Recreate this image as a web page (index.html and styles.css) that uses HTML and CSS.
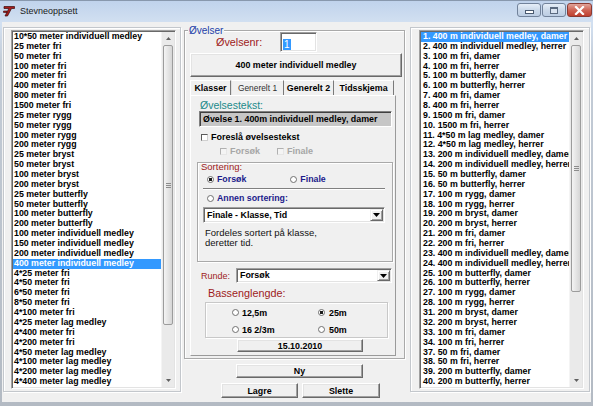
FILE: index.html
```html
<!DOCTYPE html>
<html lang="no">
<head>
<meta charset="utf-8">
<title>Stevneoppsett</title>
<link rel="stylesheet" href="styles.css">
</head>
<body>
<div class="window">
  <div class="titlebar">
    <svg class="app-icon" width="13" height="12" viewBox="0 0 13 12">
      <path d="M1 1.5 H11.5 V3.5 H8.5 L4.5 11 H2 L5.8 3.5 H1 Z" fill="#a51c1c" stroke="#3a0a0a" stroke-width="0.7"/>
      <path d="M0.5 6 H4 V7.5 H0.5 Z" fill="#a51c1c" stroke="#3a0a0a" stroke-width="0.6"/>
    </svg>
    <span class="title">Stevneoppsett</span>
    <div class="caption-buttons">
      <span class="cap cap-min"><span class="glyph-min"></span></span>
      <span class="cap cap-max"><span class="glyph-max"></span></span>
      <span class="cap cap-close">
        <svg width="11" height="9" viewBox="0 0 11 9"><path d="M2 1 L9 8 M9 1 L2 8" stroke="#fff" stroke-width="2.2" stroke-linecap="square"/></svg>
      </span>
    </div>
  </div>

  <div class="client">
    <div class="panel panel-left">
      <div class="listbox">
        <ul class="items">
          <li>10*50 meter individuell medley</li>
          <li>25 meter fri</li>
          <li>50 meter fri</li>
          <li>100 meter fri</li>
          <li>200 meter fri</li>
          <li>400 meter fri</li>
          <li>800 meter fri</li>
          <li>1500 meter fri</li>
          <li>25 meter rygg</li>
          <li>50 meter rygg</li>
          <li>100 meter rygg</li>
          <li>200 meter rygg</li>
          <li>25 meter bryst</li>
          <li>50 meter bryst</li>
          <li>100 meter bryst</li>
          <li>200 meter bryst</li>
          <li>25 meter butterfly</li>
          <li>50 meter butterfly</li>
          <li>100 meter butterfly</li>
          <li>200 meter butterfly</li>
          <li>100 meter individuell medley</li>
          <li>150 meter individuell medley</li>
          <li>200 meter individuell medley</li>
          <li class="selected">400 meter individuell medley</li>
          <li>4*25 meter fri</li>
          <li>4*50 meter fri</li>
          <li>6*50 meter fri</li>
          <li>8*50 meter fri</li>
          <li>4*100 meter fri</li>
          <li>4*25 meter lag medley</li>
          <li>4*400 meter fri</li>
          <li>4*200 meter fri</li>
          <li>4*50 meter lag medley</li>
          <li>4*100 meter lag medley</li>
          <li>4*200 meter lag medley</li>
          <li>4*400 meter lag medley</li>
        </ul>
        <div class="scrollbar">
          <div class="sb-arrow"><svg width="5" height="3" viewBox="0 0 5 3"><path d="M0 3 L2.5 0 L5 3 Z" fill="#606060"/></svg></div>
          <div class="sb-track">
            <div class="sb-thumb thumb-left"><span class="grip"></span></div>
          </div>
          <div class="sb-arrow"><svg width="5" height="3" viewBox="0 0 5 3"><path d="M0 0 L2.5 3 L5 0 Z" fill="#606060"/></svg></div>
        </div>
      </div>
    </div>

    <div class="center">
      <div class="group">
        <div class="legend">Øvelser</div>
        <div class="nr-row">
          <span class="lbl-nr">Øvelsenr:</span>
          <span class="edit"><span class="sel">1</span></span>
        </div>
        <div class="btn btn-event">400 meter individuell medley</div>
        <div class="tabs">
          <span class="tab tab-1">Klasser</span>
          <span class="tab tab-2 active">Generelt 1</span>
          <span class="tab tab-3">Generelt 2</span>
          <span class="tab tab-4">Tidsskjema</span>
        </div>
        <div class="tabpage">
          <div class="lbl-tekst">Øvelsestekst:</div>
          <div class="textbox">Øvelse 1. 400m individuell medley, damer</div>
          <div class="check-row">
            <span class="check"></span><span class="check-lbl">Foreslå øvelsestekst</span>
          </div>
          <div class="check-row sub">
            <span class="check disabled"></span><span class="check-lbl dis">Forsøk</span>
            <span class="check disabled second"></span><span class="check-lbl dis">Finale</span>
          </div>
          <div class="sort-frame">
            <div class="lbl-sort">Sortering:</div>
            <div class="radio-row">
              <span class="radio checked"></span><span class="radio-lbl">Forsøk</span>
              <span class="radio r-second"></span><span class="radio-lbl">Finale</span>
            </div>
            <div class="sep"></div>
            <div class="radio-row annen">
              <span class="radio"></span><span class="radio-lbl">Annen sortering:</span>
            </div>
            <div class="combo combo-sort">
              <span class="combo-text">Finale - Klasse, Tid</span>
              <span class="combo-btn"><svg width="7" height="4" viewBox="0 0 7 4"><path d="M0 0 H7 L3.5 4 Z" fill="#000"/></svg></span>
            </div>
            <p class="note">Fordeles sortert på klasse,<br>deretter tid.</p>
          </div>
          <div class="runde-row">
            <span class="lbl-runde">Runde:</span>
            <div class="combo combo-runde">
              <span class="combo-text">Forsøk</span>
              <span class="combo-btn"><svg width="7" height="4" viewBox="0 0 7 4"><path d="M0 0 H7 L3.5 4 Z" fill="#000"/></svg></span>
            </div>
          </div>
          <div class="lbl-bass">Bassenglengde:</div>
          <div class="bass-frame">
            <div class="bass-cell"><span class="radio"></span><span class="bass-lbl">12,5m</span></div>
            <div class="bass-cell"><span class="radio checked"></span><span class="bass-lbl">25m</span></div>
            <div class="bass-cell"><span class="radio"></span><span class="bass-lbl">16 2/3m</span></div>
            <div class="bass-cell"><span class="radio"></span><span class="bass-lbl">50m</span></div>
          </div>
          <div class="btn btn-date">15.10.2010</div>
        </div>
      </div>
      <div class="btn btn-ny">Ny</div>
      <div class="action-row">
        <div class="btn btn-lagre">Lagre</div>
        <div class="btn btn-slette">Slette</div>
      </div>
    </div>

    <div class="panel panel-right">
      <div class="listbox">
        <ul class="items">
          <li class="selected">1. 400 m individuell medley, damer</li>
          <li>2. 400 m individuell medley, herrer</li>
          <li>3. 100 m fri, damer</li>
          <li>4. 100 m fri, herrer</li>
          <li>5. 100 m butterfly, damer</li>
          <li>6. 100 m butterfly, herrer</li>
          <li>7. 400 m fri, damer</li>
          <li>8. 400 m fri, herrer</li>
          <li>9. 1500 m fri, damer</li>
          <li>10. 1500 m fri, herrer</li>
          <li>11. 4*50 m lag medley, damer</li>
          <li>12. 4*50 m lag medley, herrer</li>
          <li>13. 200 m individuell medley, damer</li>
          <li>14. 200 m individuell medley, herrer</li>
          <li>15. 50 m butterfly, damer</li>
          <li>16. 50 m butterfly, herrer</li>
          <li>17. 100 m rygg, damer</li>
          <li>18. 100 m rygg, herrer</li>
          <li>19. 200 m bryst, damer</li>
          <li>20. 200 m bryst, herrer</li>
          <li>21. 200 m fri, damer</li>
          <li>22. 200 m fri, herrer</li>
          <li>23. 400 m individuell medley, damer</li>
          <li>24. 400 m individuell medley, herrer</li>
          <li>25. 100 m butterfly, damer</li>
          <li>26. 100 m butterfly, herrer</li>
          <li>27. 100 m rygg, damer</li>
          <li>28. 100 m rygg, herrer</li>
          <li>31. 200 m bryst, damer</li>
          <li>32. 200 m bryst, herrer</li>
          <li>33. 100 m fri, damer</li>
          <li>34. 100 m fri, herrer</li>
          <li>37. 50 m fri, damer</li>
          <li>38. 50 m fri, herrer</li>
          <li>39. 200 m butterfly, damer</li>
          <li>40. 200 m butterfly, herrer</li>
        </ul>
        <div class="scrollbar">
          <div class="sb-arrow"><svg width="5" height="3" viewBox="0 0 5 3"><path d="M0 3 L2.5 0 L5 3 Z" fill="#606060"/></svg></div>
          <div class="sb-track">
            <div class="sb-thumb thumb-right"><span class="grip"></span></div>
          </div>
          <div class="sb-arrow"><svg width="5" height="3" viewBox="0 0 5 3"><path d="M0 0 L2.5 3 L5 0 Z" fill="#606060"/></svg></div>
        </div>
      </div>
    </div>
  </div>
</div>
</body>
</html>
```

FILE: styles.css
```css
* { box-sizing: border-box; }
html, body { margin: 0; padding: 0; }
body {
  width: 593px;
  height: 406px;
  overflow: hidden;
  font-family: "Liberation Sans", Arial, sans-serif;
  background: #b4bcc6;
}
.window {
  width: 593px;
  height: 406px;
  display: flex;
  flex-direction: column;
  background: linear-gradient(to bottom, #c0d3ec 0, #d2e0f1 22px, #c3ccd7 60px, #b3bac3 100%);
  border-top: 1px solid #8898ad;
}

/* title bar */
.titlebar {
  height: 21px;
  display: flex;
  align-items: center;
  flex: none;
}
.app-icon { margin-left: 3px; margin-top: -1px; flex: none; }
.title {
  margin-left: 4px;
  font-size: 9px;
  color: #1a1a1a;
  margin-top: -1px;
}
.caption-buttons {
  margin-left: auto;
  align-self: flex-start;
  margin-top: 2px;
  margin-right: 1px;
  display: flex;
  gap: 1px;
}
.cap {
  width: 24px;
  height: 14px;
  border: 1px solid #72839b;
  border-radius: 3px;
  background: linear-gradient(to bottom, #e6eef8 0%, #cbd9ea 50%, #bccde3 100%);
  display: flex;
  align-items: center;
  justify-content: center;
}
.cap-close {
  width: 25px;
  border-color: #8a3a32;
  background: linear-gradient(to bottom, #e0a49a 0%, #cf6455 50%, #c0402f 100%);
}
.glyph-min {
  width: 9px;
  height: 4px;
  margin-top: 4px;
  background: #fff;
  border: 1px solid #4a5a70;
}
.glyph-max {
  width: 8px;
  height: 7px;
  border: 1px solid #5a6a80;
  border-top-width: 2px;
  background: #d9e3f0;
}

/* client */
.client {
  height: 380px;
  margin: 0 2px;
  background: #f0f0f0;
  display: flex;
  align-items: flex-start;
  padding-top: 5px;
}
.panel {
  height: 365px;
  border: 1px solid #c3c7cc;
  box-shadow: inset 1px 1px 0 #fff, 1px 1px 0 #fff;
  padding-top: 2px;
  flex: none;
}
.panel-left {
  width: 178px;
  margin-left: 1px;
  padding-left: 7px;
}
.panel-right {
  width: 180px;
  padding-left: 8px;
}

/* listbox */
.listbox {
  width: 165px;
  height: 359px;
  display: flex;
  border-style: solid;
  border-width: 1px;
  border-color: #a0a0a0 #fff #fff #a0a0a0;
  box-shadow: inset 1px 1px 0 #696969, inset -1px -1px 0 #e3e3e3;
  background: #fff;
  padding: 1px;
}
.items {
  list-style: none;
  margin: 0;
  padding: 0;
  flex: 1;
  min-width: 0;
  overflow: hidden;
}
.items li {
  font-size: 8.8px;
  font-weight: bold;
  line-height: 9.86px;
  height: 9.86px;
  white-space: nowrap;
  overflow: hidden;
  padding-left: 1px;
  color: #000;
}
.panel-right .items li { padding-left: 2px; }
.items li.selected {
  background: #3399ff;
  color: #fff;
}
.scrollbar {
  width: 13px;
  flex: none;
  display: flex;
  flex-direction: column;
  background: #eaeaea;
  border-left: 1px solid #f4f4f4;
}
.sb-arrow {
  height: 13px;
  display: flex;
  align-items: center;
  justify-content: center;
  flex: none;
}
.sb-track {
  flex: 1;
  padding: 0 1px;
}
.sb-thumb {
  border: 1px solid #9c9c9c;
  border-radius: 2px;
  background: linear-gradient(to right, #f4f4f4, #e2e2e2 60%, #d6d6d6);
  display: flex;
  align-items: center;
  justify-content: center;
}
.thumb-left { height: 280px; }
.thumb-right { height: 247px; }
.grip {
  width: 5px;
  height: 5px;
  border-top: 1px solid #8c8c8c;
  border-bottom: 1px solid #8c8c8c;
  background: linear-gradient(to bottom, transparent 1px, #8c8c8c 1px, #8c8c8c 2px, transparent 2px);
}

/* center column */
.center {
  width: 229px;
  flex: none;
  padding-left: 3px;
  padding-top: 3px;
}
.group {
  width: 221px;
  height: 329px;
  border: 1px solid #a9a9a9;
  box-shadow: inset 1px 1px 0 #fff, 1px 1px 0 #fff;
}
.legend {
  width: fit-content;
  margin-top: -6px;
  margin-left: 3px;
  padding: 0 1px;
  background: #f0f0f0;
  color: #1c3fa8;
  font-size: 10px;
  line-height: 11px;
}
.nr-row {
  display: flex;
  align-items: center;
  height: 20px;
  margin-top: -4px;
}
.lbl-nr {
  margin-left: 31px;
  font-size: 10.8px;
  color: #9e1b1b;
  width: 46px;
}
.edit {
  margin-left: 18px;
  width: 37px;
  height: 20px;
  background: #fff;
  border-style: solid;
  border-width: 1px;
  border-color: #a0a0a0 #fff #fff #a0a0a0;
  box-shadow: inset 1px 1px 0 #696969, inset -1px -1px 0 #e3e3e3;
  padding: 1px 0 0 2px;
}
.sel {
  display: inline-block;
  background: #3399ff;
  color: #fff;
  font-size: 10px;
  line-height: 11px;
  padding: 0 1px;
}

.btn {
  background: #f0f0f0;
  border-style: solid;
  border-width: 1px;
  border-color: #fff #696969 #696969 #fff;
  box-shadow: inset -1px -1px 0 #a0a0a0, inset 1px 1px 0 #e3e3e3;
  font-size: 8.9px;
  font-weight: bold;
  color: #000;
  display: flex;
  align-items: center;
  justify-content: center;
}
.btn-event {
  margin: 1px 0 0 5px;
  width: 212px;
  height: 24px;
}

/* tabs */
.tabs {
  display: flex;
  margin: 3px 0 0 5px;
  height: 15px;
}
.tab {
  height: 15px;
  font-size: 8.9px;
  font-weight: bold;
  display: flex;
  align-items: center;
  justify-content: center;
  border-top: 1px solid #fff;
  border-right: 1px solid #7a7a7a;
  color: #000;
}
.tab-1 { width: 41px; border-left: 1px solid #fff; }
.tab-2 { width: 53px; }
.tab-3 { width: 50px; }
.tab-4 { width: 60px; }
.tab.active {
  font-weight: normal;
  color: #303030;
  font-size: 8.4px;
  border-left: 1px solid #e0e0e0;
}
.tabpage {
  margin-left: 5px;
  width: 206px;
  height: 261px;
  border-top: 1px solid #fff;
  border-left: 1px solid #fff;
  border-right: 1px solid #9a9a9a;
  border-bottom: 1px solid #9a9a9a;
}
.lbl-tekst {
  margin: 4px 0 0 9px;
  font-size: 10.5px;
  line-height: 11px;
  color: #1b8a8a;
}
.textbox {
  margin-left: 8px;
  width: 193px;
  height: 16px;
  background: #c6c6c6;
  border-style: solid;
  border-width: 1px;
  border-color: #808080 #fff #fff #808080;
  box-shadow: inset 1px 1px 0 #404040;
  font-size: 8.9px;
  font-weight: bold;
  line-height: 14px;
  padding-left: 3px;
  white-space: nowrap;
  overflow: hidden;
}
.check-row {
  display: flex;
  align-items: center;
  height: 10px;
  margin-top: 5px;
  padding-left: 10px;
}
.check-row.sub {
  margin-top: 4px;
  padding-left: 29px;
}
.check {
  width: 7px;
  height: 7px;
  background: #fff;
  border-style: solid;
  border-width: 1px;
  border-color: #5a5a5a #d0d0d0 #d0d0d0 #5a5a5a;
  flex: none;
}
.check.disabled {
  background: #f4f4f4;
  border-color: #b0b0b0 #e6e6e6 #e6e6e6 #b0b0b0;
}
.check.second { margin-left: 17px; }
.check-lbl {
  margin-left: 3px;
  font-size: 9px;
  font-weight: bold;
  color: #000;
}
.check-lbl.dis {
  color: #a6a6a6;
  margin-left: 3px;
}

/* sortering frame */
.sort-frame {
  margin: 6px 0 0 6px;
  width: 196px;
  height: 100px;
  border: 1px solid #a9a9a9;
  box-shadow: inset 1px 1px 0 #fff, 1px 1px 0 #fff;
  padding-left: 3px;
}
.lbl-sort {
  margin-top: -2px;
  font-size: 9.5px;
  line-height: 11px;
  color: #9e1b1b;
}
.radio-row {
  display: flex;
  align-items: center;
  height: 10px;
  margin-top: 2px;
  padding-left: 6px;
}
.radio {
  width: 7px;
  height: 7px;
  border-radius: 50%;
  border: 1px solid #707070;
  background: #fff;
  flex: none;
}
.radio.checked {
  background: radial-gradient(circle, #1c1c1c 0 1.5px, #fff 2px);
}
.radio-lbl {
  margin-left: 3px;
  font-size: 8.8px;
  font-weight: bold;
  color: #1c1c8c;
}
.r-second { margin-left: 44px; }
.sep {
  margin: 4px 0 0 2px;
  width: 182px;
  height: 2px;
  border-top: 1px solid #808080;
  border-bottom: 1px solid #fff;
}
.radio-row.annen { margin-top: 3px; }
.combo {
  display: flex;
  background: #fff;
  border-style: solid;
  border-width: 1px;
  border-color: #a0a0a0 #fff #fff #a0a0a0;
  box-shadow: inset 1px 1px 0 #696969, inset -1px -1px 0 #e3e3e3;
  padding: 1px;
}
.combo-sort {
  margin: 4px 0 0 2px;
  width: 182px;
  height: 16px;
}
.combo-text {
  flex: 1;
  font-size: 8.9px;
  font-weight: bold;
  line-height: 12px;
  padding-left: 2px;
  white-space: nowrap;
}
.combo-btn {
  width: 13px;
  flex: none;
  background: #f0f0f0;
  border-style: solid;
  border-width: 1px;
  border-color: #f0f0f0 #696969 #696969 #f0f0f0;
  box-shadow: inset 1px 1px 0 #fff, inset -1px -1px 0 #a0a0a0;
  display: flex;
  align-items: center;
  justify-content: center;
}
.note {
  margin: 5px 0 0 4px;
  font-size: 9.5px;
  line-height: 10px;
  color: #111;
}

.runde-row {
  display: flex;
  align-items: center;
  margin-top: 6px;
  height: 15px;
  padding-left: 10px;
}
.lbl-runde {
  font-size: 9px;
  color: #9e1b1b;
  width: 35px;
}
.combo-runde {
  width: 156px;
  height: 15px;
}
.combo-runde .combo-text { line-height: 11px; }

.lbl-bass {
  margin: 4px 0 0 17px;
  font-size: 10.8px;
  line-height: 12px;
  color: #9e1b1b;
}
.bass-frame {
  margin: 3px 0 0 14px;
  width: 183px;
  height: 36px;
  border: 1px solid #c8c8c8;
  box-shadow: inset 1px 1px 0 #fff, 1px 1px 0 #fff;
  display: grid;
  grid-template-columns: 86px 1fr;
  grid-template-rows: 17px 17px;
  padding: 1px 0 0 26px;
}
.bass-cell {
  display: flex;
  align-items: center;
}
.bass-lbl {
  margin-left: 3px;
  font-size: 8.9px;
  font-weight: bold;
  color: #000;
}
.bass-cell:nth-child(even) .bass-lbl { margin-left: 4px; }
.btn-date {
  margin: 1px 0 0 46px;
  width: 126px;
  height: 13px;
}

.btn-ny {
  margin: 5px 0 0 52px;
  width: 127px;
  height: 14px;
}
.action-row {
  display: flex;
  gap: 4px;
  margin: 5px 0 0 37px;
}
.btn-lagre { width: 77px; height: 15px; }
.btn-slette { width: 78px; height: 15px; }
```
